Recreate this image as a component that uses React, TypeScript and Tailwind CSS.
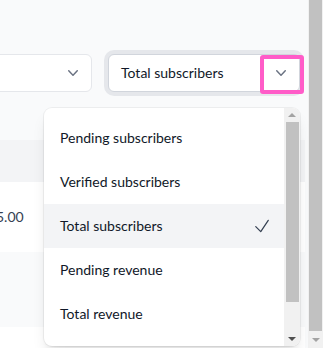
import React from "react";

const options = [
  "Pending subscribers",
  "Verified subscribers",
  "Total subscribers",
  "Pending revenue",
  "Total revenue",
  "Verified revenue",
];

function ChevronDown({ className }: { className?: string }) {
  return (
    <svg viewBox="0 0 20 20" fill="currentColor" className={className} aria-hidden="true">
      <path
        fillRule="evenodd"
        d="M5.23 7.21a.75.75 0 011.06.02L10 11.168l3.71-3.938a.75.75 0 111.08 1.04l-4.25 4.5a.75.75 0 01-1.08 0l-4.25-4.5a.75.75 0 01.02-1.06z"
        clipRule="evenodd"
      />
    </svg>
  );
}

function CheckIcon({ className }: { className?: string }) {
  return (
    <svg viewBox="0 0 24 24" fill="none" stroke="currentColor" strokeWidth={1.5} className={className} aria-hidden="true">
      <path strokeLinecap="round" strokeLinejoin="round" d="m4.5 12.75 6 6 9-13.5" />
    </svg>
  );
}

// classic scrollbar arrows
const ArrowUp = ({ dark }: { dark?: boolean }) => (
  <div
    className={`h-0 w-0 border-x-[4px] border-b-[4px] border-x-transparent ${
      dark ? "border-b-[#505050]" : "border-b-[#a3a3a3]"
    }`}
  />
);
const ArrowDown = ({ dark }: { dark?: boolean }) => (
  <div
    className={`h-0 w-0 border-x-[4px] border-t-[4px] border-x-transparent ${
      dark ? "border-t-[#505050]" : "border-t-[#a3a3a3]"
    }`}
  />
);

export default function App() {
  const selected = "Total subscribers";

  return (
    <div className="flex h-[348px] overflow-hidden bg-[#f9fafb] font-['Lato',sans-serif] text-sm text-gray-800">
      <div className="relative flex-1">
        <div className="flex gap-4 pt-[54px]">
          {/* period select, mostly off to the left */}
          <div className="-ml-[100px] flex h-[38px] w-[192px] shrink-0 items-center justify-end rounded-md border border-gray-200 bg-white pr-2">
            <ChevronDown className="h-5 w-5 text-gray-500" />
          </div>

          {/* metric select (focused) */}
          <div className="relative flex h-[38px] w-[192px] shrink-0 items-center justify-between rounded-md border border-gray-300 bg-white pl-3 pr-2 ring-4 ring-[#e5e7eb]">
            <span className="text-gray-900">{selected}</span>
            <ChevronDown className="h-5 w-5 text-gray-500" />
            <div className="absolute -right-[5px] top-0 h-[39px] w-[44px] rounded-[3px] border-4 border-[#ff5cc8]" />
          </div>
        </div>

        {/* table behind the menu */}
        <div className="mr-[3px] mt-[48px]">
          <div className="h-[42px] bg-[#f3f4f6]" />
          <div className="flex h-[70px] items-center bg-white">
            <span className="-ml-[4px] text-gray-700">5.00</span>
          </div>
          <div className="h-[75px] bg-[#f9fafb]" />
          <div className="h-[30px] bg-white" />
        </div>

        {/* open listbox */}
        <div className="absolute left-[44px] top-[108px] flex h-[238px] w-[256px] overflow-hidden rounded-lg bg-white shadow-lg ring-1 ring-black/5">
          <ul className="w-[240px] py-2">
            {options.slice(0, 5).map((opt) => {
              const active = opt === selected;
              return (
                <li
                  key={opt}
                  className={`flex h-[44px] items-center justify-between pl-4 pr-3 text-gray-900 ${
                    active ? "bg-[#f3f4f6]" : ""
                  }`}
                >
                  <span>{opt}</span>
                  {active && <CheckIcon className="h-5 w-5 text-gray-700" />}
                </li>
              );
            })}
          </ul>
          <div className="flex w-[16px] flex-col items-center bg-[#f1f1f1]">
            <div className="flex h-[14px] items-center justify-center">
              <ArrowUp />
            </div>
            <div className="h-[180px] w-[13px] bg-[#c1c1c1]" />
            <div className="flex-1" />
            <div className="flex h-[14px] items-center justify-center">
              <ArrowDown dark />
            </div>
          </div>
        </div>
      </div>

      {/* page scrollbar */}
      <div className="flex w-[15px] shrink-0 flex-col items-center bg-[#f1f1f1]">
        <div className="h-[331px] w-[13px] bg-[#c1c1c1]" />
        <div className="flex flex-1 items-center justify-center">
          <ArrowDown />
        </div>
      </div>
    </div>
  );
}
